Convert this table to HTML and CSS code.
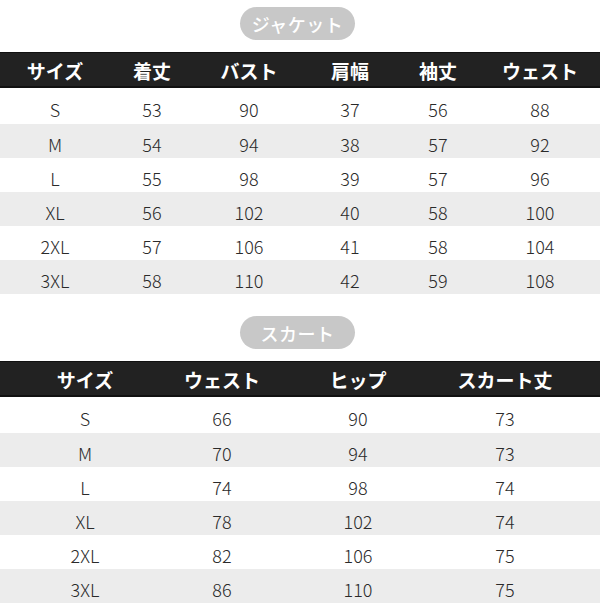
FILE: index.html
```html
<!DOCTYPE html>
<html lang="ja">
<head>
<meta charset="utf-8">
<link rel="stylesheet" href="styles.css">
</head>
<body>
<section class="section first">
  <div class="pill-wrap"><span class="pill">ジャケット</span></div>
  <div class="table t6">
    <div class="row head"><span>サイズ</span><span>着丈</span><span>バスト</span><span>肩幅</span><span>袖丈</span><span>ウェスト</span></div>
    <div class="row tall"><span>S</span><span>53</span><span>90</span><span>37</span><span>56</span><span>88</span></div>
    <div class="row alt"><span>M</span><span>54</span><span>94</span><span>38</span><span>57</span><span>92</span></div>
    <div class="row"><span>L</span><span>55</span><span>98</span><span>39</span><span>57</span><span>96</span></div>
    <div class="row alt"><span>XL</span><span>56</span><span>102</span><span>40</span><span>58</span><span>100</span></div>
    <div class="row"><span>2XL</span><span>57</span><span>106</span><span>41</span><span>58</span><span>104</span></div>
    <div class="row alt"><span>3XL</span><span>58</span><span>110</span><span>42</span><span>59</span><span>108</span></div>
  </div>
</section>
<section class="section second">
  <div class="pill-wrap"><span class="pill">スカート</span></div>
  <div class="table t4">
    <div class="row head"><span>サイズ</span><span>ウェスト</span><span>ヒップ</span><span>スカート丈</span><span></span></div>
    <div class="row tall"><span>S</span><span>66</span><span>90</span><span>73</span><span></span></div>
    <div class="row alt"><span>M</span><span>70</span><span>94</span><span>73</span><span></span></div>
    <div class="row"><span>L</span><span>74</span><span>98</span><span>74</span><span></span></div>
    <div class="row alt"><span>XL</span><span>78</span><span>102</span><span>74</span><span></span></div>
    <div class="row"><span>2XL</span><span>82</span><span>106</span><span>75</span><span></span></div>
    <div class="row alt"><span>3XL</span><span>86</span><span>110</span><span>75</span><span></span></div>
  </div>
</section>
</body>
</html>
```
FILE: styles.css
```css
html, body {
  margin: 0;
  padding: 0;
  background: #ffffff;
}
body {
  width: 600px;
  font-family: "Noto Sans CJK JP", "Noto Sans", sans-serif;
  color: #2a2a2a;
}
.section {
  display: flex;
  flex-direction: column;
  gap: 12px;
}
.first {
  padding-top: 7px;
}
.second {
  padding-top: 22px;
}
.pill-wrap {
  display: flex;
  justify-content: center;
  padding-right: 5px;
}
.pill {
  display: flex;
  align-items: center;
  justify-content: center;
  width: 115px;
  height: 33px;
  border-radius: 17px;
  background: #c8c8c8;
  color: #ffffff;
  font-size: 18px;
  font-weight: 500;
  letter-spacing: 0.5px;
}
.table {
  display: flex;
  flex-direction: column;
}
.row {
  display: grid;
  box-sizing: border-box;
  height: 34px;
  padding-top: 6px;
  align-items: center;
  font-size: 18px;
  font-weight: 300;
}
.row span {
  text-align: center;
}
.t6 .row {
  grid-template-columns: 110px 84px 110px 92px 84px 120px;
}
.t4 .row {
  grid-template-columns: 170px 104px 168px 126px 1fr;
}
.row.tall {
  height: 36px;
}
.row.alt {
  background: #ececec;
}
.row.head {
  height: 36px;
  padding-top: 2px;
  background: #222222;
  border-top: 1px solid #111111;
  border-bottom: 2px solid #111111;
  color: #ffffff;
  font-size: 19px;
  font-weight: 700;
}
```
